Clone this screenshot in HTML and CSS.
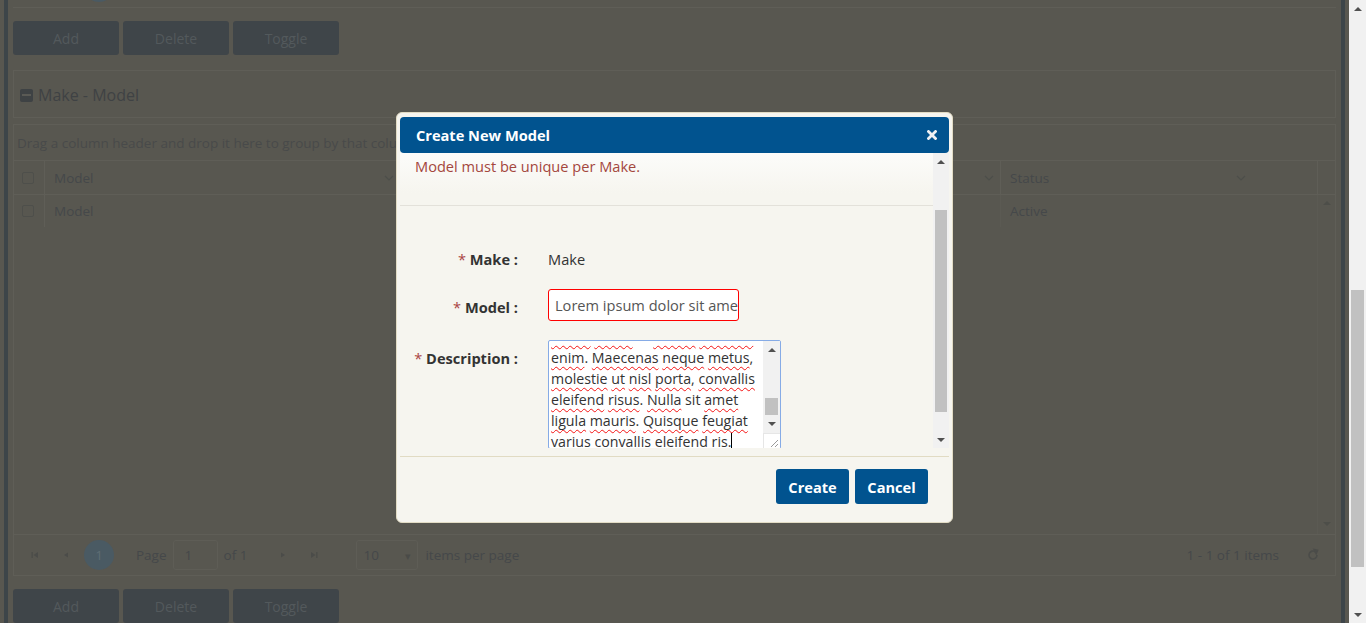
FILE: index.html
```html
<!DOCTYPE html>
<html lang="en">
<head>
<meta charset="utf-8">
<title>Make - Model</title>
<link rel="stylesheet" href="styles.css">
</head>
<body>
<div class="page">
  <div class="gutter"></div>
  <div class="edge"></div>
  <main class="main">
    <div class="prev-pager"><span class="prev-num"></span></div>
    <div class="toolbar">
      <button class="btn">Add</button>
      <button class="btn">Delete</button>
      <button class="btn">Toggle</button>
    </div>

    <section class="panel">
      <h2 class="panel-title"><span class="minus-icon"><span class="minus-bar"></span></span>Make - Model</h2>
    </section>

    <div class="grid">
      <div class="group-bar">Drag a column header and drop it here to group by that column</div>
      <div class="grid-head">
        <div class="cell c-chk"><span class="cb"></span></div>
        <div class="cell c-model">Model<svg class="chev" viewBox="0 0 10 6"><polyline points="1,1 5,5 9,1"/></svg></div>
        <div class="cell c-mid"><svg class="chev" viewBox="0 0 10 6"><polyline points="1,1 5,5 9,1"/></svg></div>
        <div class="cell c-status">Status<svg class="chev" viewBox="0 0 10 6"><polyline points="1,1 5,5 9,1"/></svg></div>
        <div class="cell c-sb"></div>
      </div>
      <div class="grid-body">
        <div class="rows">
          <div class="grid-row">
            <div class="cell c-chk"><span class="cb"></span></div>
            <div class="cell c-model">Model</div>
            <div class="cell c-mid"></div>
            <div class="cell c-status">Active</div>
          </div>
        </div>
        <div class="grid-sb">
          <span class="tri up dim"></span>
          <span class="tri down dim"></span>
        </div>
      </div>
      <div class="pager">
        <span class="pg-btn"><svg viewBox="0 0 8 8"><rect x="0.5" y="1" width="1.3" height="6"/><polygon points="7,1 2.5,4 7,7"/></svg></span>
        <span class="pg-btn"><svg viewBox="0 0 8 8"><polygon points="6,1.5 2,4 6,6.5"/></svg></span>
        <span class="pg-num">1</span>
        <span class="pg-label">Page</span>
        <span class="pg-input">1</span>
        <span class="pg-of">of 1</span>
        <span class="pg-btn pg-next"><svg viewBox="0 0 8 8"><polygon points="2,1.5 6,4 2,6.5"/></svg></span>
        <span class="pg-btn"><svg viewBox="0 0 8 8"><polygon points="1,1 5.5,4 1,7"/><rect x="6.2" y="1" width="1.3" height="6"/></svg></span>
        <span class="pg-size">10<span class="pg-caret">&#9662;</span></span>
        <span class="pg-per">items per page</span>
        <span class="pg-info">1 - 1 of 1 items</span>
        <span class="pg-refresh"><svg viewBox="0 0 14 14"><path d="M11 7a4 4 0 1 1-1.6-3.2"/><polygon points="8.2,1.6 11.6,2.4 10.2,5.6"/></svg></span>
      </div>
    </div>

    <div class="toolbar">
      <button class="btn">Add</button>
      <button class="btn">Delete</button>
      <button class="btn">Toggle</button>
    </div>
  </main>
  <div class="edge"></div>
  <div class="gap"></div>
  <div class="page-sb">
    <span class="sb-arrow"><span class="tri up"></span></span>
    <span class="sb-track"><span class="page-thumb"></span></span>
    <span class="sb-arrow"><span class="tri down"></span></span>
  </div>
</div>

<div class="modal" role="dialog" aria-label="Create New Model">
  <div class="modal-head">
    <span class="modal-title">Create New Model</span>
    <svg class="close" viewBox="0 0 10 10"><path d="M1.5 1.5L8.5 8.5M8.5 1.5L1.5 8.5"/></svg>
  </div>
  <div class="modal-body">
    <div class="modal-content">
      <div class="msg">Model must be unique per Make.</div>
      <form class="form">
        <div class="form-row">
          <label class="lbl"><span class="req">*</span> Make :</label>
          <div class="val">Make</div>
        </div>
        <div class="form-row">
          <label class="lbl"><span class="req">*</span> Model :</label>
          <div class="input invalid">Lorem ipsum dolor sit amet</div>
        </div>
        <div class="form-row">
          <label class="lbl"><span class="req">*</span> Description :</label>
          <div class="textarea">
            <div class="ta-text">
              <div class="ta-lines">
                <div class="hidden-line"><span class="sp">luctus</span> <span class="sp">quam</span> et <span class="sp">massa</span> <span class="sp">pulvinar</span></div>
                <div><span class="sp">enim</span>. <span class="sp">Maecenas</span> <span class="sp">neque</span> <span class="sp">metus</span>,</div>
                <div><span class="sp">molestie</span> <span class="sp">ut</span> <span class="sp">nisl</span> <span class="sp">porta</span>, <span class="sp">convallis</span></div>
                <div><span class="sp">eleifend</span> <span class="sp">risus</span>. <span class="sp">Nulla</span> sit <span class="sp">amet</span></div>
                <div><span class="sp">ligula</span> <span class="sp">mauris</span>. <span class="sp">Quisque</span> <span class="sp">feugiat</span></div>
                <div>varius convallis eleifend ris.<span class="caret"></span></div>
              </div>
            </div>
            <div class="ta-sb">
              <span class="sb-arrow small"><span class="tri up"></span></span>
              <span class="ta-track"><span class="ta-thumb"></span></span>
              <span class="sb-arrow small"><span class="tri down"></span></span>
              <span class="resizer"><svg viewBox="0 0 16 15"><path d="M14 6L7 13M14 10L11 13"/></svg></span>
            </div>
          </div>
        </div>
      </form>
    </div>
    <div class="modal-sb">
      <span class="sb-arrow"><span class="tri up"></span></span>
      <span class="sb-track"><span class="modal-thumb"></span></span>
      <span class="sb-arrow"><span class="tri down"></span></span>
    </div>
  </div>
  <div class="modal-foot">
    <button class="mbtn">Create</button>
    <button class="mbtn">Cancel</button>
  </div>
</div>
</body>
</html>
```

FILE: styles.css
```css
* { box-sizing: border-box; }
html, body { margin: 0; height: 100%; }
body {
  background: #585750;
  font-family: "Open Sans", "Noto Sans", sans-serif;
  font-size: 14px;
  color: #45484a;
  overflow: hidden;
}

/* ---------- dimmed page ---------- */
.page { display: flex; height: 623px; }
.gutter { width: 4px; }
.edge { width: 4px; background: #3d4549; }
.gap { width: 4px; }
.main { flex: 1; min-width: 0; padding: 0 5px; }

.prev-pager {
  height: 8px;
  border-bottom: 1px solid #5f5e57;
  overflow: hidden;
}
.prev-num {
  display: block;
  width: 30px; height: 30px;
  border-radius: 50%;
  background: #4a5a63;
  margin: -28px 0 0 71px;
}

.toolbar { display: flex; gap: 4px; margin-top: 13px; }
.btn {
  width: 106px; height: 34px;
  border: 0; border-radius: 3px;
  background: #3f4549;
  color: #53595c;
  font-family: inherit; font-size: 14px;
  padding: 0;
}

.panel {
  margin-top: 15px;
  height: 48px;
  border: 1px solid #5f5e57;
  display: flex; align-items: center;
  padding: 2px 0 0 6px;
}
.panel-title {
  margin: 0;
  display: flex; align-items: center; gap: 5px;
  font-size: 16px; font-weight: 400;
  color: #3f4244;
}
.minus-icon {
  width: 13px; height: 13px;
  border-radius: 2px;
  background: #3e4244;
  display: flex; align-items: center; justify-content: center;
}
.minus-bar { width: 9px; height: 2px; background: #5a5a55; }

.grid { margin-top: 6px; border: 1px solid #5f5e57; font-size: 13.5px; }
.group-bar {
  height: 36px; line-height: 36px;
  padding-left: 3px;
  border-bottom: 1px solid #5f5e57;
  color: #484a4a;
  white-space: nowrap; overflow: hidden;
}
.grid-head { display: flex; height: 34px; border-bottom: 1px solid #5f5e57; }
.cell {
  display: flex; align-items: center;
  padding-left: 9px;
  white-space: nowrap;
}
.c-chk { width: 30px; padding-left: 8px; }
.c-model { width: 356px; border-left: 1px solid #5f5e57; }
.c-mid { width: 600px; border-left: 1px solid #5f5e57; }
.c-status { width: 317px; border-left: 1px solid #5f5e57; }
.c-sb { flex: 1; border-left: 1px solid #5f5e57; }
.grid-head .cell { justify-content: space-between; padding-right: 6px; }
.grid-head .c-status { padding-right: 71px; }
.grid-head .c-chk { justify-content: flex-start; }
.chev { width: 10px; height: 6px; fill: none; stroke: #4d4e4a; stroke-width: 1.2; margin-left: auto; }
.cb {
  width: 12px; height: 12px;
  border: 1px solid #4e4f4b; border-radius: 2px;
}

.grid-body { display: flex; height: 339px; }
.rows { flex: 1; }
.grid-row { display: flex; height: 32px; }
.grid-row .c-mid, .grid-row .c-status { border-left-color: #5b5a53; }
.grid-sb {
  width: 19px;
  border-left: 1px solid #5b5a53;
  display: flex; flex-direction: column; justify-content: space-between; align-items: center;
  padding: 6px 0 8px;
}

.pager {
  height: 41px;
  border-top: 1px solid #5f5e57;
  display: flex; align-items: center;
  padding-left: 6px;
  white-space: nowrap;
}
.pg-btn { width: 30px; height: 30px; display: flex; align-items: center; justify-content: center; margin-right: 1px; }
.pg-btn svg { width: 8px; height: 8px; fill: #4b4c49; }
.pg-num {
  width: 30px; height: 30px; border-radius: 50%;
  background: #4a5a63; color: #5e6d74;
  display: flex; align-items: center; justify-content: center;
  margin-left: 2px;
}
.pg-label { margin-left: 22px; }
.pg-input {
  width: 45px; height: 30px;
  border: 1px solid #5e5d56; border-radius: 3px;
  margin-left: 6px; padding: 5px 0 0 11px;
}
.pg-of { margin-left: 6px; }
.pg-next { margin-left: 21px; }
.pg-size {
  width: 62px; height: 30px;
  border: 1px solid #5e5d56; border-radius: 3px;
  margin-left: 26px; padding: 0 6px;
  display: flex; align-items: center; justify-content: space-between;
}
.pg-caret { font-size: 11px; color: #4a4b48; }
.pg-per { margin-left: 7px; }
.pg-info { margin-left: auto; }
.pg-refresh { width: 14px; height: 14px; margin: 0 15px 0 27px; display: flex; }
.pg-refresh svg { width: 14px; height: 14px; fill: #4b4c49; stroke: #4b4c49; stroke-width: 1.6; }
.pg-refresh svg path { fill: none; }

.tri { width: 0; height: 0; border-left: 4px solid transparent; border-right: 4px solid transparent; }
.tri.up { border-bottom: 4px solid #505050; }
.tri.down { border-top: 4px solid #505050; }
.tri.dim.up { border-bottom-color: #4d4e49; }
.tri.dim.down { border-top-color: #4d4e49; }

/* page scrollbar */
.page-sb { width: 17px; background: #f1f1f1; display: flex; flex-direction: column; }
.sb-arrow { height: 17px; display: flex; align-items: center; justify-content: center; flex: none; }
.sb-track { flex: 1; display: flex; flex-direction: column; padding: 0 2px; }
.page-thumb { display: block; margin-top: 273px; height: 277px; background: #c1c1c1; }

/* ---------- modal ---------- */
.modal {
  position: fixed;
  left: 396px; top: 112px;
  width: 557px; height: 411px;
  background: #f6f5ef;
  border: 1px solid #e2dcc5;
  border-radius: 6px;
  padding: 4px 3px 3px;
  display: flex; flex-direction: column;
  color: #333;
  font-size: 14.6px;
}
.modal-head {
  height: 36px; flex: none;
  background: #01538f;
  border-radius: 4px;
  display: flex; align-items: center; justify-content: space-between;
  padding: 0 12px 0 16px;
}
.modal-title { color: #fff; font-weight: 700; }
.close { width: 10px; height: 10px; stroke: #eef0f3; stroke-width: 2.8; stroke-linecap: square; }

.modal-body { height: 295px; flex: none; display: flex; }
.modal-content {
  flex: 1; min-width: 0; overflow: hidden;
  background: linear-gradient(#fcfcfa, #f6f5ef 40px);
}
.msg {
  height: 53px;
  padding: 3px 15px 0;
  line-height: 20px;
  color: #a4473d;
  border-bottom: 1px solid #e3e1da;
}
.form { padding-top: 37px; display: flex; flex-direction: column; gap: 14px; }
.form-row { display: flex; gap: 30px; }
.form-row:last-child { margin-top: 5px; }
.lbl {
  width: 118px; flex: none;
  text-align: right;
  font-weight: 700; color: #333;
  line-height: 20px; padding-top: 6px;
}
.form-row:nth-child(2) .lbl { padding-top: 8px; }
.form-row:last-child .lbl { padding-top: 8px; }
.req { color: #a94442; font-weight: 400; }
.val { line-height: 20px; padding-top: 6px; height: 32px; color: #333; }
.input {
  width: 191px; height: 32px;
  background: #fff;
  border: 1px solid #f00; border-radius: 3px;
  padding: 0 6px;
  line-height: 30px;
  color: #555;
  white-space: nowrap; overflow: hidden;
}
.textarea {
  width: 233px; height: 109px;
  background: #fff;
  border: 1px solid #86abe6; border-radius: 2px;
  display: flex;
  font-size: 14.2px;
}
.ta-text { flex: 1; overflow: hidden; padding-left: 2px; }
.ta-lines { margin-top: -15px; line-height: 21px; white-space: nowrap; color: #333; }
.hidden-line { color: transparent; }
.sp { text-decoration: underline wavy #f41414; text-decoration-thickness: 1.3px; text-underline-offset: 3px; }
.caret { display: inline-block; width: 1px; height: 17px; background: #000; vertical-align: -3px; }
.ta-sb { width: 17px; flex: none; background: #f1f1f1; display: flex; flex-direction: column; }
.sb-arrow.small { height: 18px; }
.ta-track { flex: 1; padding: 0 2px; }
.ta-thumb { display: block; margin-top: 39px; height: 17px; background: #c1c1c1; }
.resizer { height: 15px; background: #fff; border-top: 1px solid #e6e6e6; border-left: 1px solid #e6e6e6; display: flex; }
.resizer svg { width: 16px; height: 15px; stroke: #9a9a9a; stroke-width: 1; fill: none; }

.modal-sb { width: 16px; flex: none; background: #f1f1f1; display: flex; flex-direction: column; }
.modal-thumb { display: block; margin-top: 40px; height: 202px; background: #c1c1c1; }

.modal-foot {
  margin-top: 8px;
  border-top: 1px solid #e1dbc3;
  flex: 1;
  display: flex; justify-content: flex-end; align-items: flex-start;
  gap: 6px;
  padding: 12px 21px 0 0;
}
.mbtn {
  width: 73px; height: 35px;
  background: #01538f; color: #fff;
  border: 0; border-radius: 3px;
  font-family: inherit; font-size: 14.6px; font-weight: 700;
  padding: 0;
}
```
